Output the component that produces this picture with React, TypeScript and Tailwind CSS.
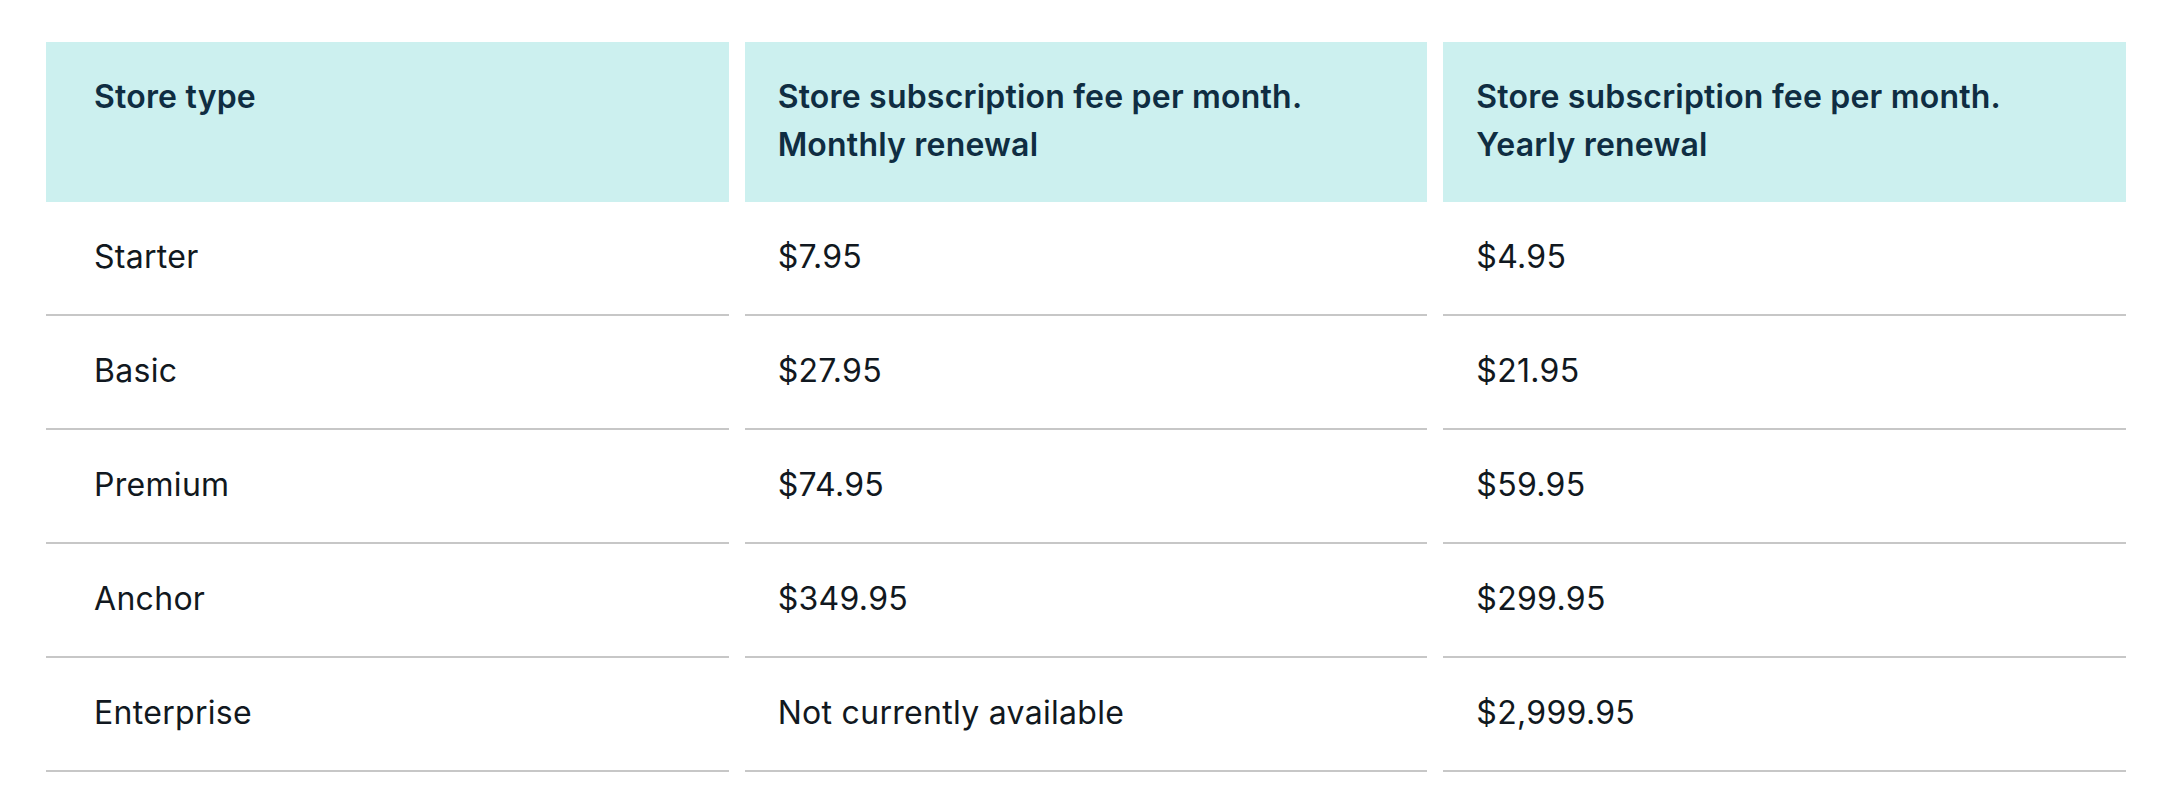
const HEADERS = [
  ['Store type'],
  ['Store subscription fee per month.', 'Monthly renewal'],
  ['Store subscription fee per month.', 'Yearly renewal'],
];

const ROWS = [
  ['Starter', '$7.95', '$4.95'],
  ['Basic', '$27.95', '$21.95'],
  ['Premium', '$74.95', '$59.95'],
  ['Anchor', '$349.95', '$299.95'],
  ['Enterprise', 'Not currently available', '$2,999.95'],
];

export default function App() {
  return (
    <div className="min-h-screen bg-white font-['Inter',sans-serif]">
      <div className="ml-[46px] w-[2080px] pt-[42px] grid grid-cols-3 gap-x-4">
        {HEADERS.map((lines, i) => (
          <div
            key={i}
            className={`h-[160px] bg-[#ccf0ef] pt-[31px] text-[32px] leading-[48px] font-semibold tracking-[0.2px] text-[#0f2d42] ${
              i === 0 ? 'pl-[48px]' : 'pl-[33px]'
            }`}
          >
            {lines.map((l) => (
              <div key={l}>{l}</div>
            ))}
          </div>
        ))}
        {ROWS.map((row) =>
          row.map((cell, i) => (
            <div
              key={row[0] + i}
              className={`h-[114px] flex items-center border-b-2 border-[#c7c7c7] pb-[2px] text-[32px] tracking-[0.3px] text-[#111820] ${
                i === 0 ? 'pl-[48px]' : 'pl-[33px]'
              }`}
            >
              {cell}
            </div>
          ))
        )}
      </div>
    </div>
  );
}
